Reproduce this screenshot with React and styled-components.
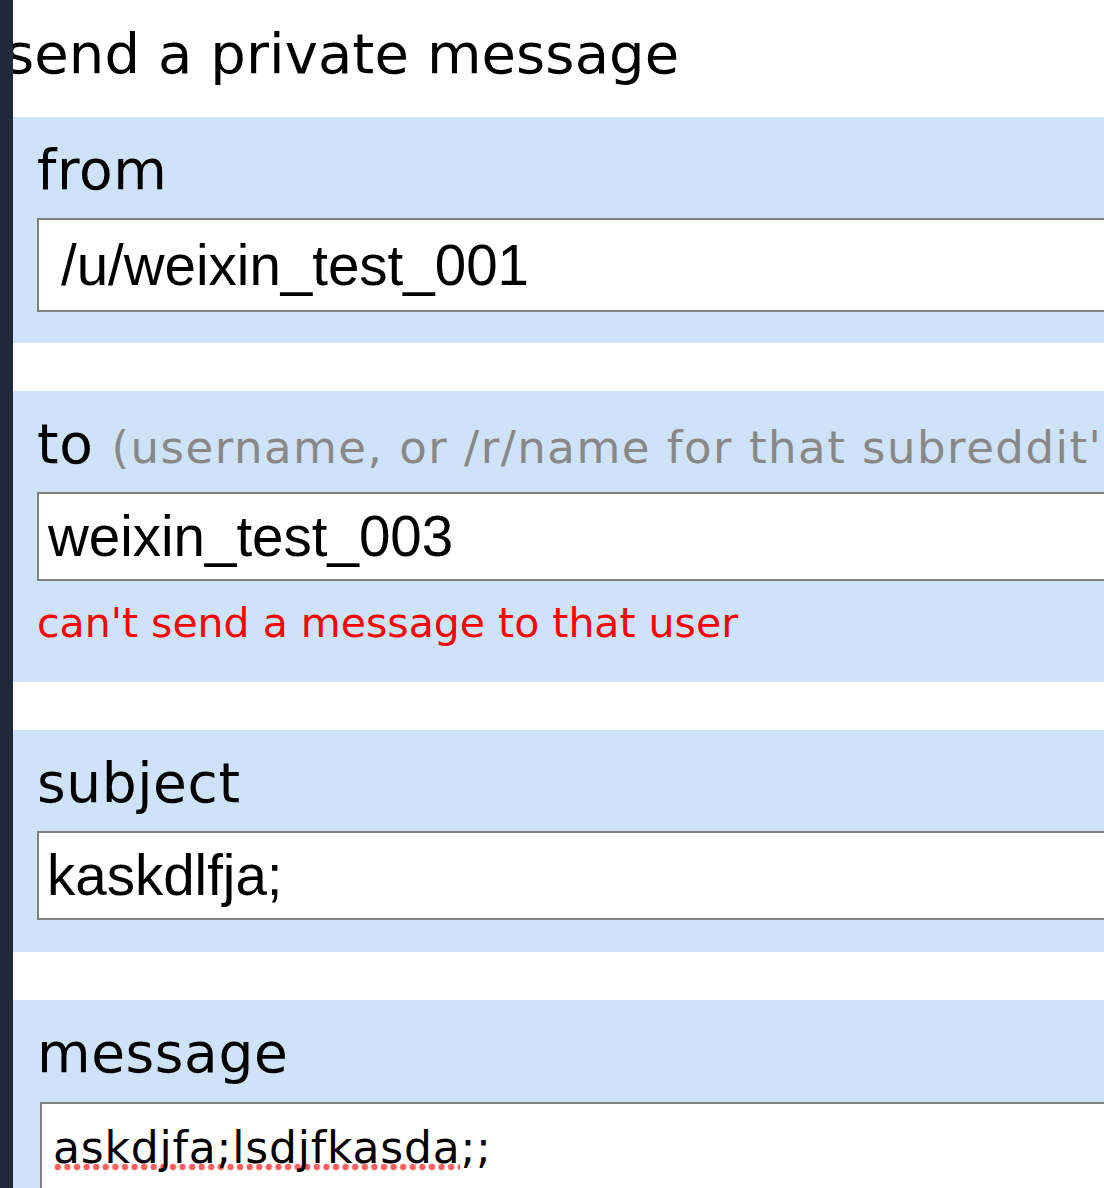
import React from "react";
import styled, { createGlobalStyle } from "styled-components";

const GlobalStyle = createGlobalStyle`
  html, body {
    margin: 0;
    padding: 0;
    overflow: hidden;
    background: #ffffff;
  }
  * { box-sizing: border-box; }
`;

const Page = styled.div`
  display: flex;
  width: 100vw;
  height: 100vh;
  overflow: hidden;
  background: #ffffff;
`;

const SideStrip = styled.div`
  flex: none;
  width: 13px;
  background: #1e293b;
`;

const Content = styled.main`
  flex: 1;
  min-width: 0;
  overflow: hidden;
  font-family: "DejaVu Sans", Verdana, sans-serif;
  color: #000;
`;

const Title = styled.h1`
  margin: 21px 0 31px -8px;
  font-size: 56px;
  font-weight: 400;
  line-height: 65px;
  letter-spacing: 0.1px;
  white-space: nowrap;
`;

const Form = styled.form`
  display: flex;
  flex-direction: column;
  gap: 48px;
  width: 1800px;
`;

const Field = styled.div`
  background: #cee3f8;
  padding: 21px 0 ${(p) => p.$bottom ?? 32}px 24px;
`;

const Label = styled.div`
  font-size: 55px;
  line-height: 64px;
  letter-spacing: 0.6px;
  white-space: nowrap;
  margin-bottom: ${(p) => p.$gap ?? 16}px;
`;

const Hint = styled.span`
  font-size: 45px;
  line-height: 45px;
  letter-spacing: 1.5px;
  color: #888888;
`;

const TextInput = styled.input`
  display: block;
  width: 1500px;
  height: ${(p) => p.$height}px;
  margin: 0;
  padding: 0 ${(p) => p.$pad}px;
  border: 2px solid #808080;
  border-radius: 0;
  background: #ffffff;
  font-family: "Liberation Sans", Arial, sans-serif;
  font-size: 56.5px;
  color: #000;
  outline: none;
`;

const ErrorText = styled.div`
  margin-top: 18px;
  font-size: 41px;
  line-height: 48px;
  color: #ff0000;
  white-space: nowrap;
`;

const MessageBox = styled.div`
  margin-left: 3px;
  width: 1500px;
  height: 260px;
  padding: 10px 8px 10px 11px;
  border: 2px solid #808080;
  background: #ffffff;
  font-size: 44px;
  line-height: 67px;
  letter-spacing: 0.8px;
  white-space: nowrap;
`;

const Misspelled = styled.span`
  background-image: radial-gradient(
    circle at 50% 50%,
    rgba(255, 96, 96, 1) 3px,
    transparent 3.6px
  );
  background-size: 9.6px 8px;
  background-repeat: repeat-x;
  background-position: 0 41px;
`;

export default function App() {
  return (
    <>
      <GlobalStyle />
      <Page>
        <SideStrip />
        <Content>
          <Title>send a private message</Title>
          <Form onSubmit={(e) => e.preventDefault()}>
            <Field $bottom={31}>
              <Label>from</Label>
              <TextInput $height={94} $pad={22} readOnly defaultValue="/u/weixin_test_001" />
            </Field>
            <Field $bottom={35}>
              <Label>
                to <Hint>(username, or /r/name for that subreddit's moderators)</Hint>
              </Label>
              <TextInput $height={89} $pad={9} readOnly defaultValue="weixin_test_003" />
              <ErrorText>can't send a message to that user</ErrorText>
            </Field>
            <Field>
              <Label>subject</Label>
              <TextInput $height={89} $pad={8} readOnly defaultValue="kaskdlfja;" />
            </Field>
            <Field>
              <Label $gap={17}>message</Label>
              <MessageBox role="textbox" aria-multiline="true">
                <Misspelled>askdjfa;lsdjfkasda</Misspelled>;;
              </MessageBox>
            </Field>
          </Form>
        </Content>
      </Page>
    </>
  );
}
